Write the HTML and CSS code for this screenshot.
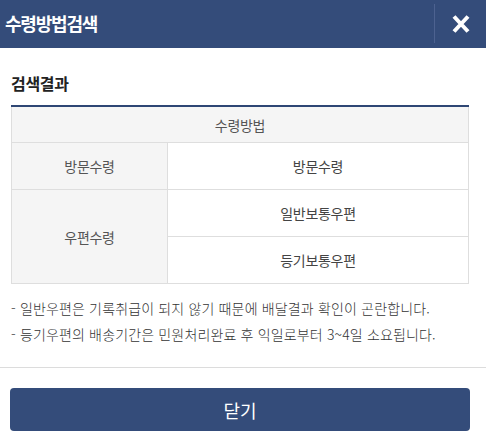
FILE: index.html
```html
<!DOCTYPE html>
<html lang="ko">
<head>
<meta charset="utf-8">
<title>수령방법검색</title>
<link rel="stylesheet" href="styles.css">
</head>
<body>
<div class="popup">
  <header class="popup-head">
    <h1 class="popup-title">수령방법검색</h1>
    <button class="popup-close" type="button" aria-label="닫기">
      <svg width="20" height="18" viewBox="0 0 20 18"><path d="M3 1.5 L17 16.5 M17 1.5 L3 16.5" stroke="#fff" stroke-width="4" stroke-linecap="butt" fill="none"/></svg>
    </button>
  </header>
  <main class="popup-body">
    <h2 class="section-title">검색결과</h2>
    <table class="result">
      <thead>
        <tr><th colspan="2" class="col-head">수령방법</th></tr>
      </thead>
      <tbody>
        <tr><th class="row-head">방문수령</th><td>방문수령</td></tr>
        <tr><th class="row-head" rowspan="2">우편수령</th><td>일반보통우편</td></tr>
        <tr><td>등기보통우편</td></tr>
      </tbody>
    </table>
    <ul class="notes">
      <li>- 일반우편은 기록취급이 되지 않기 때문에 배달결과 확인이 곤란합니다.</li>
      <li>- 등기우편의 배송기간은 민원처리완료 후 익일로부터 3~4일 소요됩니다.</li>
    </ul>
  </main>
  <footer class="popup-foot">
    <button class="btn-close" type="button">닫기</button>
  </footer>
</div>
</body>
</html>
```
FILE: styles.css
```css
html, body {
  margin: 0;
  padding: 0;
  background: #fff;
}
body {
  font-family: "Noto Sans CJK KR", "Noto Sans", sans-serif;
  color: #333;
}
.popup {
  width: 486px;
}
.popup-head {
  display: flex;
  align-items: stretch;
  height: 48px;
  background: #344c7a;
}
.popup-title {
  flex: 1;
  margin: 0;
  padding-left: 5px;
  font-size: 18px;
  font-weight: 700;
  letter-spacing: -1.2px;
  line-height: 46px;
  color: #fff;
}
.popup-close {
  width: 52px;
  margin: 4px 0 5px;
  padding: 0;
  border: 0;
  border-left: 1px solid #4d6290;
  background: transparent;
  display: flex;
  align-items: center;
  justify-content: center;
  cursor: pointer;
}
.popup-close svg {
  display: block;
  margin-top: 1px;
}
.popup-body {
  padding: 0 11px 0 11px;
}
.section-title {
  margin: 22px 0 0;
  font-size: 16px;
  font-weight: 700;
  letter-spacing: -0.3px;
  line-height: 26px;
  color: #222;
}
.result {
  width: 458px;
  margin-top: 9px;
  border-collapse: collapse;
  border-top: 2px solid #2e4674;
  font-size: 14px;
  letter-spacing: -0.3px;
}
.result th, .result td {
  border: 1px solid #dedede;
  text-align: center;
  font-weight: 400;
  padding: 0;
}
.result .col-head {
  height: 35px;
  background: #f5f5f5;
  color: #555;
}
.result .row-head {
  width: 155px;
  background: #f5f5f5;
  color: #555;
}
.result td {
  height: 46px;
  color: #444;
  background: #fff;
}
.notes {
  list-style: none;
  margin: 11px 0 0;
  padding: 0;
  font-size: 14px;
  font-weight: 300;
  letter-spacing: 0.15px;
  line-height: 26px;
  color: #333;
}
.popup-foot {
  margin-top: 20px;
  border-top: 1px solid #dcdcdc;
  padding: 20px 16px 0 10px;
}
.btn-close {
  display: block;
  width: 460px;
  height: 43px;
  border: 0;
  border-radius: 4px;
  background: #344c7a;
  color: #fff;
  font-family: "Noto Sans CJK KR", "Noto Sans", sans-serif;
  font-size: 18px;
  font-weight: 400;
  cursor: pointer;
}
```
